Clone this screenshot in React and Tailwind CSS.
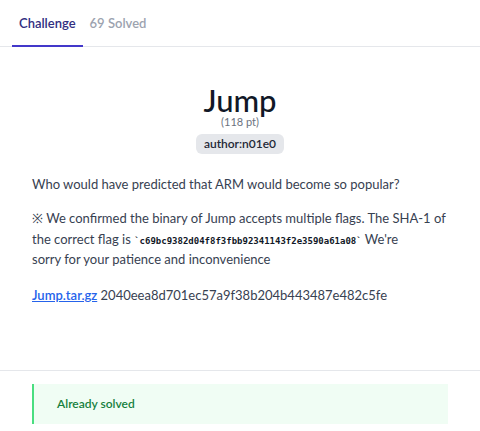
import React from 'react';

const App = () => {
  return (
    <div className="w-[480px] h-[431px] bg-white text-[#374151] overflow-hidden" style={{ fontFamily: 'Lato, "Open Sans", sans-serif' }}>
      <div className="flex border-b border-[#e5e7eb] px-3">
        <div className="px-[7px] pt-[14px] pb-[11px] text-[13px] font-semibold text-[#312e81] border-b-2 border-[#4338ca] -mb-px">
          Challenge
        </div>
        <div className="px-[7px] pt-[14px] pb-[11px] text-[13px] font-semibold text-[#9ca3af]">
          69 Solved
        </div>
      </div>

      <div className="px-8 pt-[35px]">
        <div className="flex flex-col items-center">
          <h1 className="text-[31px] leading-[36px] font-medium text-[#111827]">Jump</h1>
          <div className="-mt-[3px] text-[11px] leading-[14px] text-[#6b7280]">(118 pt)</div>
          <span className="mt-[5px] rounded-md bg-[#e5e7eb] px-2 py-[2px] text-[12px] leading-[16px] font-semibold text-[#1f2937]">
            author:n01e0
          </span>
        </div>

        <div className="mt-[20px] text-[13px] leading-[20.5px]">
          <p>Who would have predicted that ARM would become so popular?</p>
          <p className="mt-[14px]">
            ※ We confirmed the binary of Jump accepts multiple flags. The SHA-1 of the correct flag is{' '}
            <code className="text-[9px] leading-none font-bold text-[#111827]" style={{ fontFamily: '"DejaVu Sans Mono", monospace' }}>
              `c69bc9382d04f8f3fbb92341143f2e3590a61a08`
            </code>{' '}
            We're<br />sorry for your patience and inconvenience
          </p>
          <p className="mt-[15px]">
            <a href="#" className="text-[#2563eb] underline font-semibold">Jump.tar.gz</a>{' '}
            <span>2040eea8d701ec57a9f38b204b443487e482c5fe</span>
          </p>
        </div>
      </div>

      <div className="mt-[65px] border-t border-[#e5e7eb] px-8 pt-[13px]">
        <div className="border-l-2 border-[#4ade80] bg-[#f0fdf4] pl-[23px] py-[11px] text-[12px] leading-[18px] font-semibold text-[#15803d]">
          Already solved
        </div>
      </div>
    </div>
  );
};

export default App;
